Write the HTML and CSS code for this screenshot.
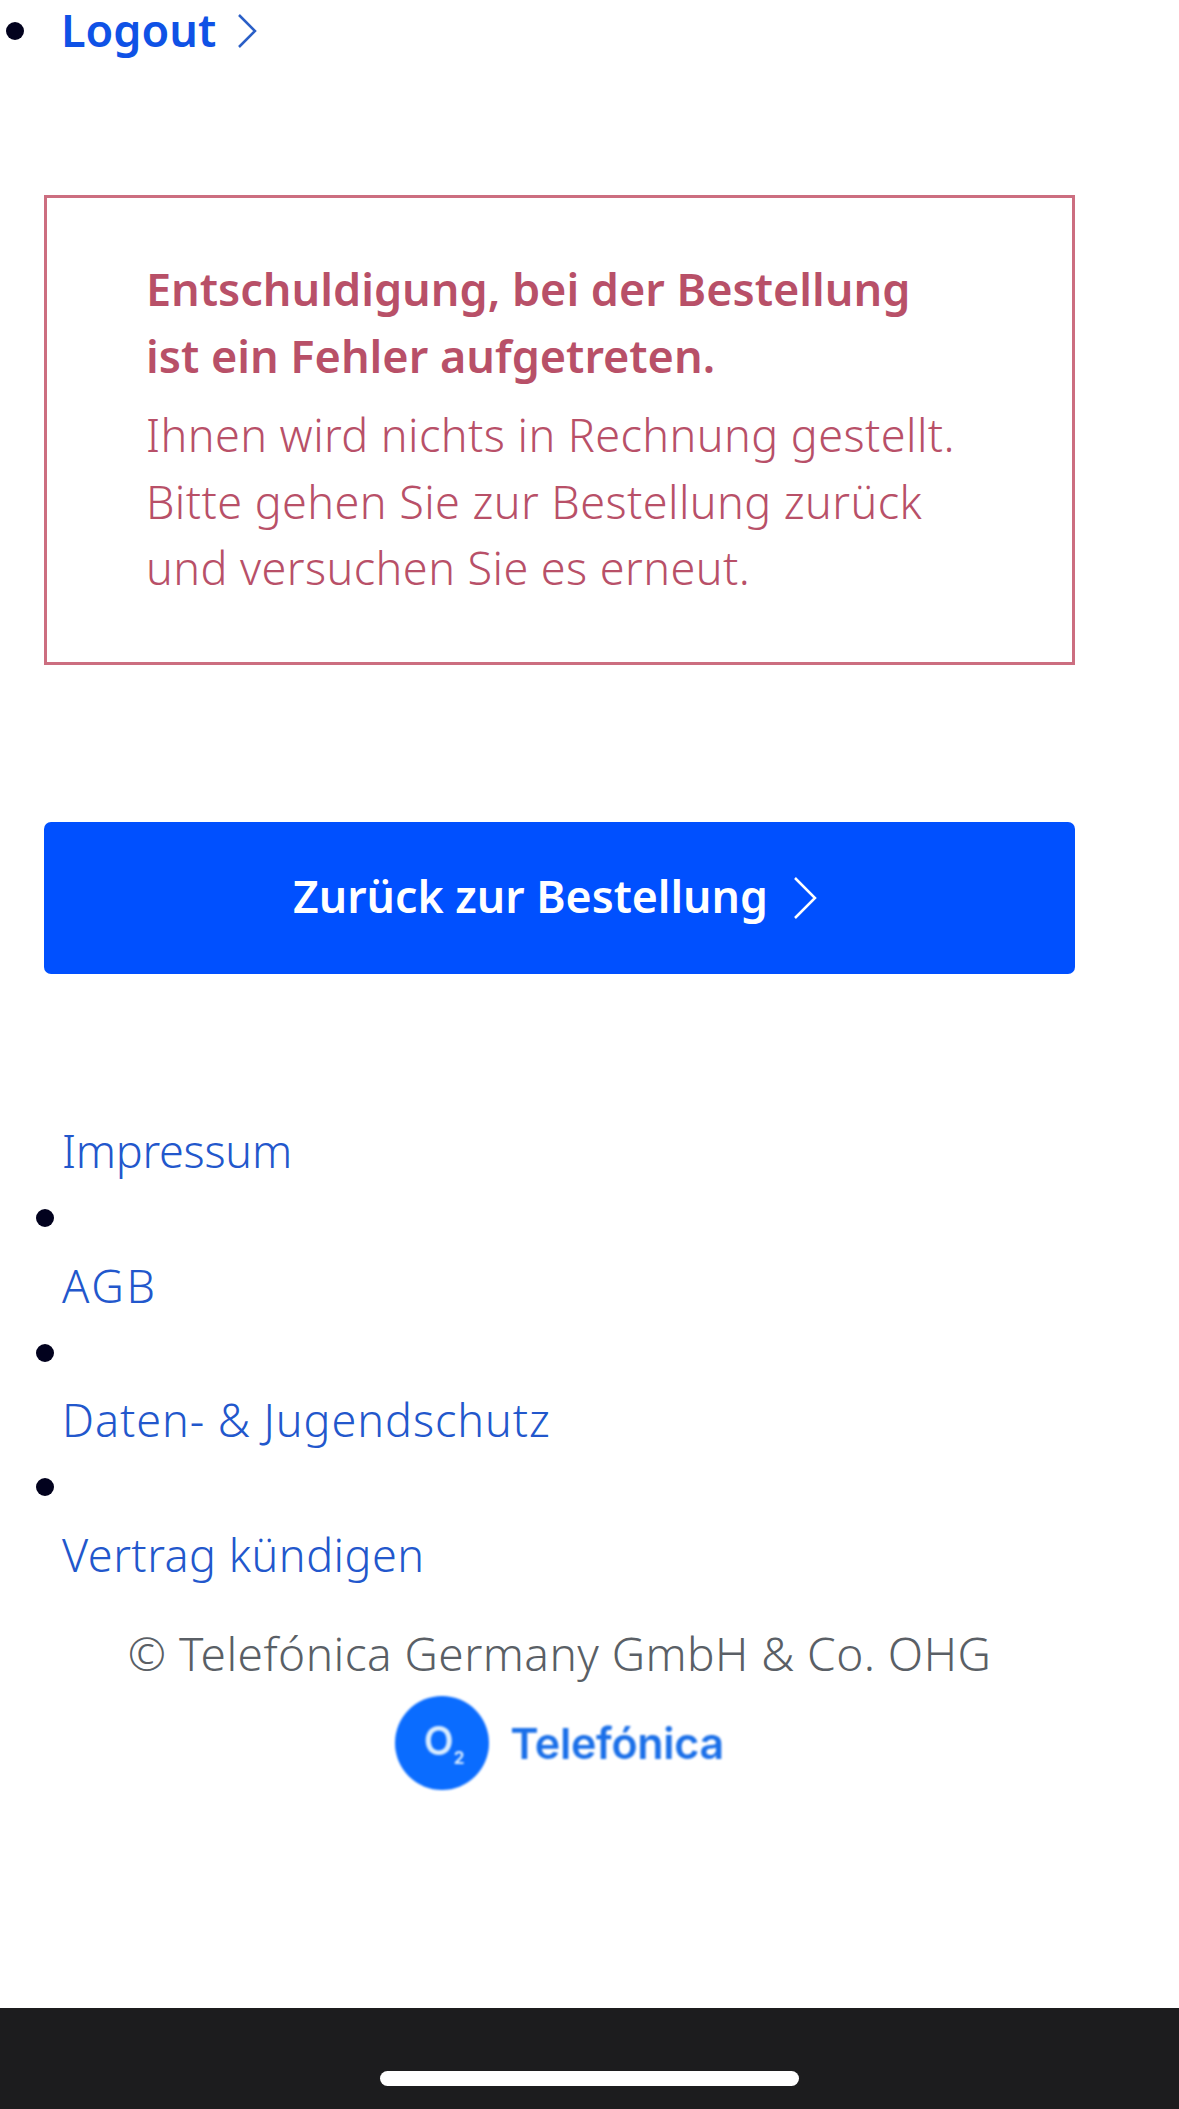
FILE: index.html
```html
<!DOCTYPE html>
<html>
<head>
    <meta charset="UTF-8">
    <title>Bestellung - Fehler</title>
    <link rel="stylesheet" href="styles.css">
</head>
<body>
    <div class="page">
        <div class="logout-row">
            <span class="dot"></span>
            <a class="logout-link" href="#">Logout</a>
            <svg class="chevron chevron-small" viewBox="0 0 20 34"><path d="M2 1 L18 17 L2 33"/></svg>
        </div>

        <div class="error-box">
            <div class="error-title">Entschuldigung, bei der Bestellung<br>ist ein Fehler aufgetreten.</div>
            <div class="error-text">Ihnen wird nichts in Rechnung gestellt.<br>Bitte gehen Sie zur Bestellung zurück<br>und versuchen Sie es erneut.</div>
        </div>

        <a class="back-btn" href="#">
            <span>Zurück zur Bestellung</span>
            <svg class="chevron chevron-big" viewBox="0 0 24 44"><path d="M2 2 L22 22 L2 42"/></svg>
        </a>

        <ul class="footer-links">
            <li><a class="link-tight" href="#">Impressum</a></li>
            <li class="dot-row"><span class="dot"></span></li>
            <li><a class="link-abbr" href="#">AGB</a></li>
            <li class="dot-row"><span class="dot"></span></li>
            <li><a class="link-wide" href="#">Daten- &amp; Jugendschutz</a></li>
            <li class="dot-row"><span class="dot"></span></li>
            <li><a href="#">Vertrag kündigen</a></li>
        </ul>

        <div class="copyright">© Telefónica Germany GmbH &amp; Co. OHG</div>

        <div class="logo">
            <div class="logo-circle"><span class="logo-o">O</span><span class="logo-two">2</span></div>
            <div class="logo-name">Telefónica</div>
        </div>

        <div class="home-bar">
            <div class="home-indicator"></div>
        </div>
    </div>
</body>
</html>
```

FILE: styles.css
```css
body {
    font-family: "Noto Sans", "Open Sans", sans-serif;
    font-weight: 300;
    margin: 0;
    padding: 0;
    background-color: #fff;
    overflow: hidden;
}
.page {
    display: flex;
    flex-direction: column;
    height: 2109px;
}
.dot {
    display: block;
    width: 18px;
    height: 18px;
    border-radius: 50%;
    background-color: #02021e;
}
.chevron path {
    fill: none;
    stroke-width: 2.5px;
}
.logout-row {
    display: flex;
    align-items: center;
    height: 62px;
    padding-left: 6px;
}
.logout-link {
    margin: -4px 0 0 37px;
    font-size: 45px;
    font-weight: 600;
    color: #0f52e6;
    text-decoration: none;
}
.chevron-small {
    width: 20px;
    height: 34px;
    margin-left: 21px;
}
.chevron-small path {
    stroke: #2a5fc7;
}
.error-box {
    margin: 133px 0 0 44px;
    width: 1031px;
    height: 470px;
    box-sizing: border-box;
    border: 3px solid #cc6e80;
    padding: 58px 0 0 99px;
    font-size: 45px;
    line-height: 66.5px;
    color: #b85068;
}
.error-title {
    font-weight: 600;
}
.error-text {
    margin-top: 13px;
    letter-spacing: 0.43px;
}
.back-btn {
    display: flex;
    align-items: center;
    justify-content: center;
    gap: 25px;
    margin: 157px 0 0 44px;
    padding-right: 9px;
    box-sizing: border-box;
    width: 1031px;
    height: 152px;
    border-radius: 7px;
    background-color: #0050ff;
    color: #fff;
    font-size: 44.6px;
    font-weight: 600;
    text-decoration: none;
}
.back-btn span {
    margin-top: -5px;
}
.chevron-big {
    width: 24px;
    height: 44px;
}
.chevron-big path {
    stroke: #fff;
}
.footer-links {
    list-style: none;
    margin: 143px 0 0;
    padding: 0 0 0 62px;
    font-size: 45px;
    letter-spacing: 0.5px;
}
.footer-links li {
    height: 67.3px;
    line-height: 67px;
}
.footer-links a {
    color: #2257cc;
    text-decoration: none;
}
.footer-links .link-tight {
    letter-spacing: -0.25px;
}
.footer-links .link-abbr {
    letter-spacing: 2.7px;
}
.footer-links .link-wide {
    letter-spacing: 0.93px;
}
.dot-row {
    display: flex;
    align-items: center;
    margin-left: -26px;
}
.copyright {
    margin: 32px 0 0 44px;
    width: 1031px;
    text-align: center;
    font-size: 46px;
    letter-spacing: 0.45px;
    line-height: 66px;
    color: #5a5f66;
}
.logo {
    display: flex;
    align-items: center;
    justify-content: center;
    gap: 21px;
    margin: 10px 0 0 44px;
    width: 1031px;
    filter: blur(0.8px);
}
.logo-circle {
    width: 94px;
    height: 94px;
    border-radius: 50%;
    background-color: #0a6cff;
    color: #d8ecff;
    display: flex;
    align-items: center;
    justify-content: center;
}
.logo-o {
    font-family: "Inter", sans-serif;
    font-size: 39px;
    font-weight: 600;
    margin-top: -6px;
}
.logo-two {
    font-family: "Inter", sans-serif;
    font-size: 17px;
    font-weight: 700;
    margin: 30px -4px 0 0;
}
.logo-name {
    font-family: "Inter", sans-serif;
    font-size: 43px;
    font-weight: 600;
    color: #1a6fe8;
    letter-spacing: -0.3px;
}
.home-bar {
    margin-top: auto;
    height: 101px;
    background-color: #1c1c1e;
    display: flex;
    justify-content: center;
    padding-top: 63px;
    box-sizing: border-box;
}
.home-indicator {
    width: 419px;
    height: 15px;
    border-radius: 8px;
    background-color: #fff;
}
```
